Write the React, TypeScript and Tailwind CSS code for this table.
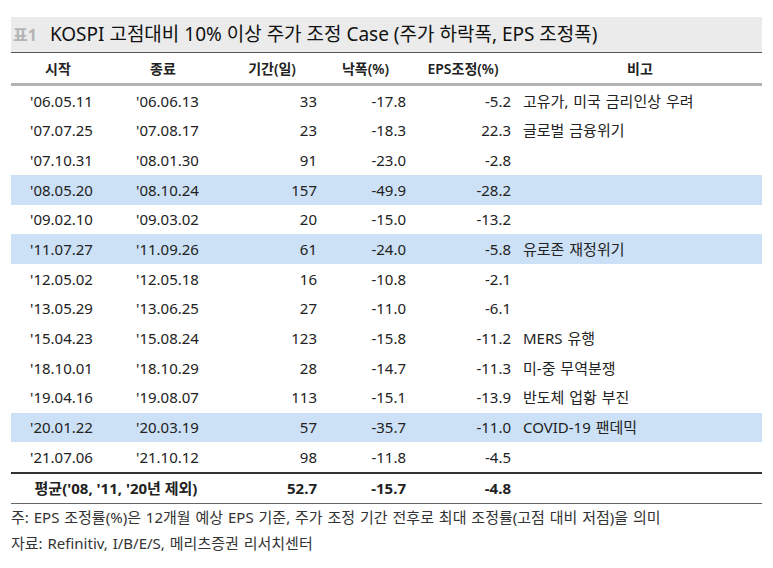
import React from "react";

type Row = {
    start: string;
    end: string;
    days: string;
    drop: string;
    eps: string;
    note: string;
    hl?: boolean;
};

const rows: Row[] = [
    { start: "'06.05.11", end: "'06.06.13", days: "33", drop: "-17.8", eps: "-5.2", note: "고유가, 미국 금리인상 우려" },
    { start: "'07.07.25", end: "'07.08.17", days: "23", drop: "-18.3", eps: "22.3", note: "글로벌 금융위기" },
    { start: "'07.10.31", end: "'08.01.30", days: "91", drop: "-23.0", eps: "-2.8", note: "" },
    { start: "'08.05.20", end: "'08.10.24", days: "157", drop: "-49.9", eps: "-28.2", note: "", hl: true },
    { start: "'09.02.10", end: "'09.03.02", days: "20", drop: "-15.0", eps: "-13.2", note: "" },
    { start: "'11.07.27", end: "'11.09.26", days: "61", drop: "-24.0", eps: "-5.8", note: "유로존 재정위기", hl: true },
    { start: "'12.05.02", end: "'12.05.18", days: "16", drop: "-10.8", eps: "-2.1", note: "" },
    { start: "'13.05.29", end: "'13.06.25", days: "27", drop: "-11.0", eps: "-6.1", note: "" },
    { start: "'15.04.23", end: "'15.08.24", days: "123", drop: "-15.8", eps: "-11.2", note: "MERS 유행" },
    { start: "'18.10.01", end: "'18.10.29", days: "28", drop: "-14.7", eps: "-11.3", note: "미-중 무역분쟁" },
    { start: "'19.04.16", end: "'19.08.07", days: "113", drop: "-15.1", eps: "-13.9", note: "반도체 업황 부진" },
    { start: "'20.01.22", end: "'20.03.19", days: "57", drop: "-35.7", eps: "-11.0", note: "COVID-19 팬데믹", hl: true },
    { start: "'21.07.06", end: "'21.10.12", days: "98", drop: "-11.8", eps: "-4.5", note: "" },
];

const grid = "grid grid-cols-[94px_116px_102px_85px_110px_1fr] items-center";

export default function App() {
    return (
        <div
            className="w-[773px] h-[568px] bg-white pt-[17px] px-[11px] text-[#222]"
            style={{ fontFamily: '"Noto Sans", "Noto Sans CJK KR", sans-serif' }}
        >
            {/* Title */}
            <div className="h-[36px] bg-[#ebebeb] border-b border-[#555] flex items-center gap-[13px] pl-[2px]">
                <span className="text-[16px] font-bold text-[#b4b4b4]">표1</span>
                <span className="text-[19px] text-[#111]">
                    KOSPI 고점대비 10% 이상 주가 조정 Case (주가 하락폭, EPS 조정폭)
                </span>
            </div>

            {/* Header */}
            <div className={`${grid} h-[33px] border-b-[3px] border-[#b3b3b3] text-[14px] font-semibold text-center`}>
                <div>시작</div>
                <div>종료</div>
                <div>기간(일)</div>
                <div>낙폭(%)</div>
                <div>EPS조정(%)</div>
                <div>비고</div>
            </div>

            {/* Body */}
            {rows.map((r) => (
                <div
                    key={r.start}
                    className={`${grid} h-[29.7px] text-[15px] ${r.hl ? "bg-[#cce1f6]" : ""}`}
                >
                    <div className="pl-[19px]">{r.start}</div>
                    <div className="pl-[31px]">{r.end}</div>
                    <div className="text-right pr-[6px]">{r.days}</div>
                    <div className="text-right pr-[2px]">{r.drop}</div>
                    <div className="text-right pr-[7px]">{r.eps}</div>
                    <div className="pl-[5px] [word-spacing:1px]">{r.note}</div>
                </div>
            ))}

            {/* Average */}
            <div className={`${grid} h-[32px] border-t-2 border-t-[#333] border-b border-b-[#666] text-[15px] font-bold`}>
                <div className="col-span-2 text-center">평균('08, '11, '20년 제외)</div>
                <div className="text-right pr-[6px]">52.7</div>
                <div className="text-right pr-[2px]">-15.7</div>
                <div className="text-right pr-[7px]">-4.8</div>
                <div />
            </div>

            {/* Notes */}
            <div className="text-[15px] text-[#333] leading-[26px] [word-spacing:1px]">
                <div>주: EPS 조정률(%)은 12개월 예상 EPS 기준, 주가 조정 기간 전후로 최대 조정률(고점 대비 저점)을 의미</div>
                <div>자료: Refinitiv, I/B/E/S, 메리츠증권 리서치센터</div>
            </div>
        </div>
    );
}
